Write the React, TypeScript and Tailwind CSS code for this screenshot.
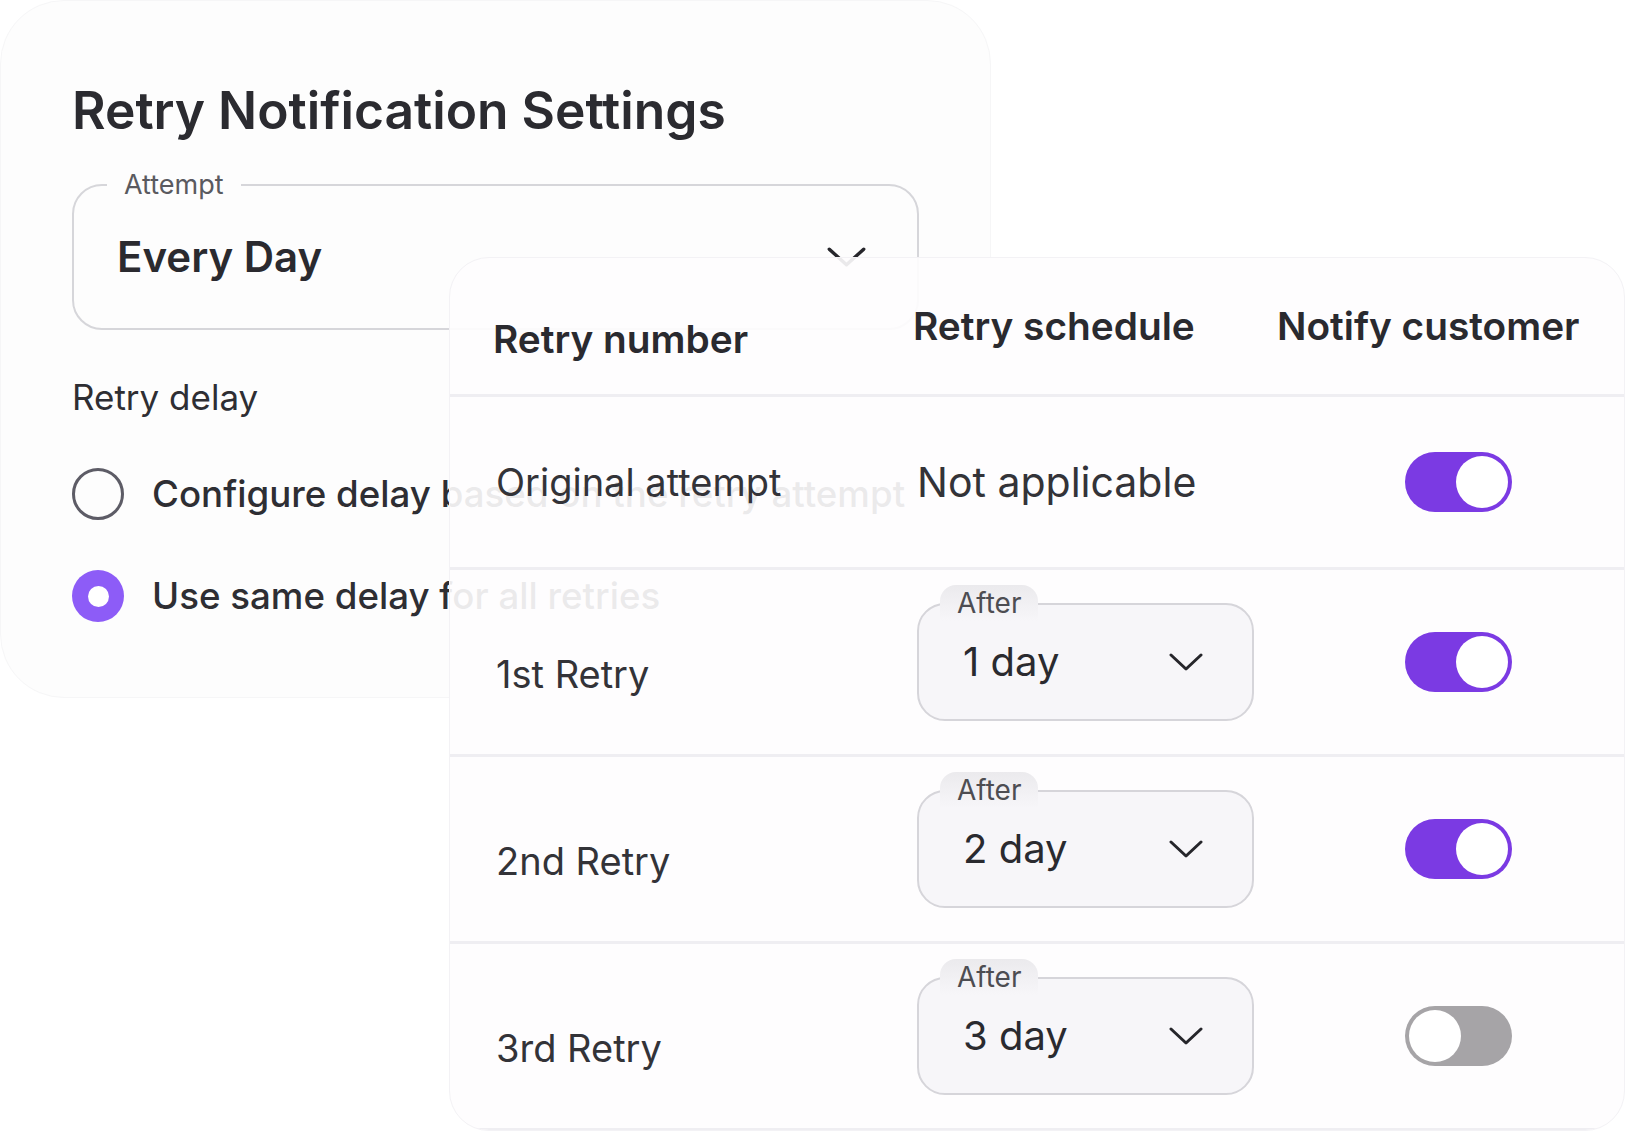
function Chevron({ w = 34, h = 18 }: { w?: number; h?: number }) {
  return (
    <svg width={w} height={h} viewBox="0 0 34 18" fill="none" preserveAspectRatio="none">
      <path d="M2 2 L17 16 L32 2" stroke="#26262b" strokeWidth="3" strokeLinecap="round" strokeLinejoin="round" />
    </svg>
  )
}

function Toggle({ on }: { on: boolean }) {
  return (
    <div
      className={
        on
          ? 'flex h-[60px] w-[107px] items-center justify-end rounded-full bg-[#7b3ae3] p-[4px]'
          : 'flex h-[60px] w-[107px] items-center justify-start rounded-full bg-[#a6a4a7] p-[4px]'
      }
    >
      <div className="h-[52px] w-[52px] rounded-full bg-white" />
    </div>
  )
}

function DaySelect({ value }: { value: string }) {
  return (
    <div className="relative flex h-[118px] w-[337px] items-center justify-between rounded-[28px] border-2 border-[#d6d5da] bg-[#f7f6f9] pl-[44px] pr-[49px]">
      <span className="absolute -top-[20px] left-[21px] h-[36px] rounded-t-[16px] bg-gradient-to-b from-[#ebeaed] to-[#f7f6f9] px-[17px] text-[28px] leading-[36px] text-[#4d4d52]">
        After
      </span>
      <span className="text-[40px] leading-[48px] text-[#2a2a2f]">{value}</span>
      <Chevron />
    </div>
  )
}

const retries = [
  { label: '1st Retry', value: '1 day', on: true },
  { label: '2nd Retry', value: '2 day', on: true },
  { label: '3rd Retry', value: '3 day', on: false },
]

export default function App() {
  return (
    <div className="relative h-[1139px] w-[1628px] overflow-hidden bg-white font-[Inter,sans-serif]">
      {/* settings card underneath */}
      <div className="h-[698px] w-[991px] rounded-[64px] border border-[#f6f6f7] bg-[#fdfdfd] pl-[71px] pt-[78px]">
        <h1 className="text-[51.5px] font-semibold leading-[62px] text-[#2b2b30]">Retry Notification Settings</h1>

        <fieldset className="mt-[31px] h-[158px] w-[847px] rounded-[30px] border-2 border-[#d6d6da] px-[33px]">
          <legend className="px-[17px] text-[27px] leading-[26px] text-[#5a5a5f]">Attempt</legend>
          <div className="flex items-center justify-between pl-[10px] pr-[18px] pt-[34px]">
            <span className="text-[42px] font-semibold leading-[50px] text-[#2a2a2f]">Every Day</span>
            <Chevron w={39} h={20} />
          </div>
        </fieldset>

        <p className="mt-[47px] text-[35px] leading-[40px] text-[#2e2e33]">Retry delay</p>

        <div className="mt-[51px] flex items-center gap-[28px]">
          <div className="h-[52px] w-[52px] rounded-full border-[3px] border-[#5d5c66]" />
          <span className="text-[36.7px] font-medium leading-[52px] text-[#2e2e33]">Configure delay based on the retry attempt</span>
        </div>
        <div className="mt-[50px] flex items-center gap-[28px]">
          <div className="flex h-[52px] w-[52px] items-center justify-center rounded-full bg-[#8d5cf7]">
            <div className="h-[21px] w-[21px] rounded-full bg-white" />
          </div>
          <span className="text-[36.7px] font-medium leading-[52px] text-[#2e2e33]">Use same delay for all retries</span>
        </div>
      </div>

      {/* retry table card on top */}
      <div className="absolute left-[449px] top-[257px] h-[874px] w-[1176px] overflow-hidden rounded-[40px] border border-[#f3f2f5] bg-[#fefdfe]/[0.91]">
        <div className="grid h-[139px] grid-cols-[424px_360px_1fr] items-center border-b-[3px] border-[#efeef2] pl-[43px]">
          <span className="pt-[26px] text-[38.8px] font-semibold leading-[46px] text-[#2a2a2f]">Retry number</span>
          <span className="-ml-[4px] text-[38.8px] font-semibold leading-[46px] text-[#2a2a2f]">Retry schedule</span>
          <span className="text-[38.8px] font-semibold leading-[46px] text-[#2a2a2f]">Notify customer</span>
        </div>

        <div className="grid h-[173px] grid-cols-[424px_360px_1fr] items-center border-b-[3px] border-[#efeef2] pl-[46px]">
          <span className="text-[38px] leading-[46px] text-[#333338]">Original attempt</span>
          <span className="-ml-[3px] text-[41px] leading-[48px] text-[#333338]">Not applicable</span>
          <div className="ml-[125px]">
            <Toggle on />
          </div>
        </div>

        {retries.map((r) => (
          <div
            key={r.label}
            className="grid h-[187px] grid-cols-[424px_360px_1fr] items-center border-b-[3px] border-[#efeef2] pl-[46px]"
          >
            <span className="pt-[24px] text-[38px] leading-[46px] text-[#333338]">{r.label}</span>
            <div className="-ml-[3px]">
              <DaySelect value={r.value} />
            </div>
            <div className="ml-[125px]">
              <Toggle on={r.on} />
            </div>
          </div>
        ))}
      </div>
    </div>
  )
}
